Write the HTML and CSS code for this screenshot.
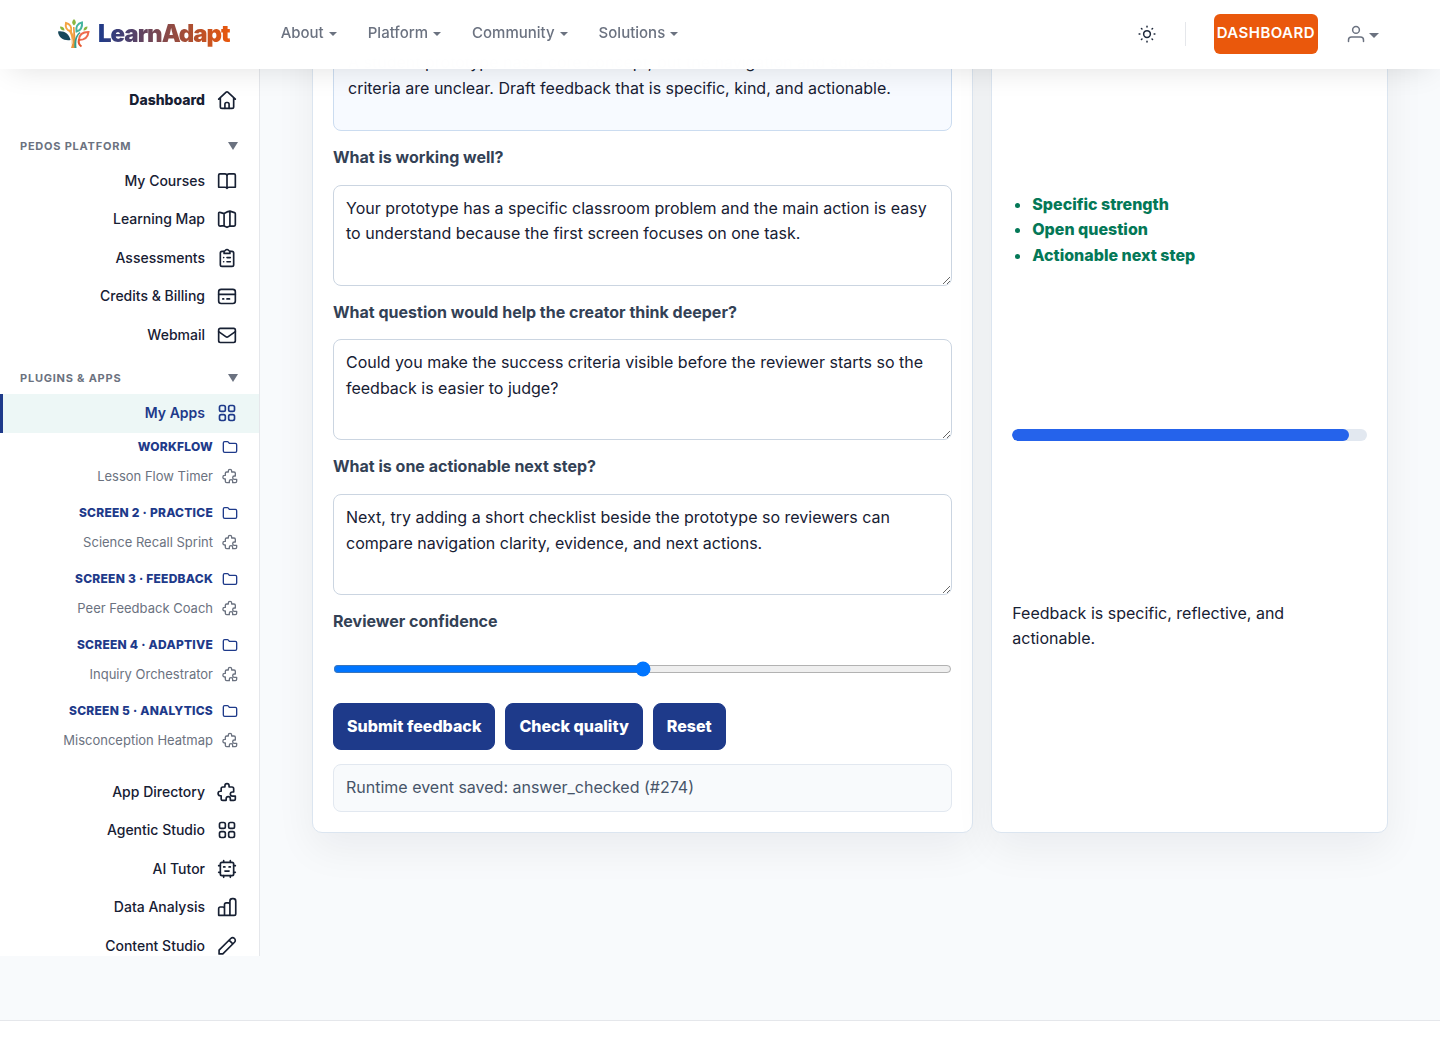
FILE: index.html
```html
<!DOCTYPE html>
<html lang="en">
<head>
    <meta charset="UTF-8">
    <meta name="viewport" content="width=device-width, initial-scale=1.0">
    <title>Peer Feedback Coach - LearnAdapt</title>
    <link rel="stylesheet" href="styles.css">
</head>
<body>
    <!-- Icon set -->
    <svg class="sprite" aria-hidden="true">
        <symbol id="i-home" viewBox="0 0 24 24"><path d="M2 11 11 2.600a1.500 1.500 0 0 1 2 0L22 11M4 9.500V20a2 2 0 0 0 2 2h12a2 2 0 0 0 2-2V9.500"/><path d="M9.500 22v-5a2 2 0 0 1 2-2h1a2 2 0 0 1 2 2v5"/></symbol>
        <symbol id="i-book" viewBox="0 0 24 24"><path d="M12 6v15V6a2.500 2.500 0 0 0-2.500-2.500H3.500A1.500 1.500 0 0 0 2 5v14.500h7.500A2.500 2.500 0 0 1 12 21a2.500 2.500 0 0 1 2.500-1.500H22V5a1.500 1.500 0 0 0-1.500-1.500h-6A2.500 2.500 0 0 0 12 6z"/></symbol>
        <symbol id="i-map" viewBox="0 0 24 24"><path d="M8.500 20 3.500 20.500A1.500 1.500 0 0 1 2 19V5a1.200 1.200 0 0 1 1.700-1L8.500 5.500v15L12 22l3.500-1.500v-18L12 3.500 8.500 5.500M15.500 2.500l5.500 1.800a1.500 1.500 0 0 1 1 1.400V19a1.500 1.500 0 0 1-1.500 1.500h-5"/></symbol>
        <symbol id="i-clipboard" viewBox="0 0 24 24"><path d="M8.500 4H6a2 2 0 0 0-2 2v14a2 2 0 0 0 2 2h12a2 2 0 0 0 2-2V6a2 2 0 0 0-2-2h-2.500"/><path d="M8.500 6.500V4c1.200 0 1.700-2.200 3.500-2.200S14.300 4 15.500 4v2.500zM8 11.500h.01M8 16.500h.01M12 11.500h4M12 16.500h4"/></symbol>
        <symbol id="i-card" viewBox="0 0 24 24"><rect x="2" y="4" width="20" height="17" rx="3"/><path d="M2 10h20M7 15.500h1M12 15.500h3"/></symbol>
        <symbol id="i-mail" viewBox="0 0 24 24"><rect x="2" y="4" width="20" height="17" rx="2"/><path d="m2 8 8.500 6a2.500 2.500 0 0 0 3 0L22 8"/></symbol>
        <symbol id="i-apps" viewBox="0 0 24 24"><rect x="3" y="3" width="7" height="7" rx="2"/><rect x="14" y="3" width="7" height="7" rx="2"/><rect x="3" y="14" width="7" height="7" rx="2"/><rect x="14" y="14" width="7" height="7" rx="2"/></symbol>
        <symbol id="i-folder" viewBox="0 0 24 24"><path d="M2 17V6a2 2 0 0 1 2-2h4a2 2 0 0 1 1.600.8L11 6.500h9a2 2 0 0 1 2 2v9.500a2 2 0 0 1-2 2H4a2 2 0 0 1-2-2z"/></symbol>
        <symbol id="i-puzzle" viewBox="0 0 24 24"><path d="M5 8a2 2 0 0 1 2-2h2.500V4.500a2.500 2.500 0 0 1 5 0V6H18a2 2 0 0 1 2 2v4h-1.500a2.500 2.500 0 0 0 0 5H22v3a2 2 0 0 1-2 2h-4v-2a2.500 2.500 0 0 0-5 0v2H7a2 2 0 0 1-2-2v-3.500H4a2.700 2.700 0 0 1 0-5.400h1z"/></symbol>
        <symbol id="i-bot" viewBox="0 0 24 24"><rect x="4" y="4" width="16" height="16" rx="2"/><path d="M8 2v2M16 2v2M8 20v2M16 20v2M2 8h2M2 16h2M20 8h2M20 16h2M8 9.500h1.500M14.500 9.500H16M9.500 14.500h5"/></symbol>
        <symbol id="i-bars" viewBox="0 0 24 24"><path d="M2 22V14a2 2 0 0 1 2-2h3a2 2 0 0 1 2 2v8zM9 22V9a2 2 0 0 1 2-2h2.500a2 2 0 0 1 2 2v13zM15.500 22V5a3 3 0 0 1 3-3h1a3 3 0 0 1 3 3v15a2 2 0 0 1-2 2z"/></symbol>
        <symbol id="i-pencil" viewBox="0 0 24 24"><path d="M2.500 21.500v-4.500L16.500 3a3 3 0 0 1 4.500 4.500L7 21.500zM14.500 5l4.500 4.500"/></symbol>
        <symbol id="i-sun" viewBox="0 0 24 24"><circle cx="12" cy="12" r="4.500"/><path d="M12 1.500v1M12 21.500v1M1.500 12h1M21.500 12h1M4.600 4.600l.7.7M18.700 18.700l.7.7M4.600 19.400l.7-.7M18.700 5.300l.7-.7"/></symbol>
        <symbol id="i-user" viewBox="0 0 24 24"><circle cx="12" cy="6.500" r="4.500"/><path d="M2 22v-2a4 4 0 0 1 4-4h12a4 4 0 0 1 4 4v2"/></symbol>
    </svg>

    <header class="navbar">
        <a class="brand" href="#">
            <svg class="brand-logo" viewBox="0 0 34 30" aria-hidden="true">
                <path fill="#f4a340" d="M14 29c1.500-6 1-13-3-18l2-.5c2 2 3 4 3.500 6.500z"/>
                <path fill="#e9963a" d="M14 29h5c-1-3-1-6-.5-9l-1-12h-1.500c.5 8 .5 15-2 21z"/>
                <path fill="#2f9e8f" d="M17.500 29c-.5-7 .5-12 5-16l1 1c-4 3.500-4.500 8-4 15z"/>
                <path fill="#17475a" d="M1 12.500c6-1 11 2 12.500 8.500C7 22 1.500 19 1 12.500z"/>
                <path fill="none" stroke="#f4a340" stroke-width="2" d="M14 12.500C9.500 11.500 8 8 9 4c4 1 6 4.500 5 8.500z"/>
                <path fill="none" stroke="#45b5a0" stroke-width="2" d="M19.500 12.500c-1-4.500 1-8 5.500-9 .5 4.500-1.500 8-5.500 9z"/>
                <path fill="none" stroke="#ef6a4c" stroke-width="2" d="M22 21c0-5 3.500-8 9.500-8-.5 5-4 8-9.500 8z"/>
                <path fill="none" stroke="#e4572e" stroke-width="2" d="M22 20c-1 4 0 6 2.500 7.500"/>
                <path fill="#8bb63f" d="M17 0c2.500 2.500 2.500 4.500 0 6.500-2.500-2-2.500-4 0-6.500zM3 7.500c3 0 4.500 1.500 4.500 4C4.500 11.500 3 10 3 7.500zM30.500 7.500c0 2.500-1.500 4-4 4 0-2.500 1.500-4 4-4z"/>
            </svg>
            <span class="brand-name">LearnAdapt</span>
        </a>
        <nav class="main-nav">
            <a href="#">About <span class="caret"></span></a>
            <a href="#">Platform <span class="caret"></span></a>
            <a href="#">Community <span class="caret"></span></a>
            <a href="#">Solutions <span class="caret"></span></a>
        </nav>
        <div class="nav-tools">
            <button class="icon-btn" type="button" aria-label="Toggle theme"><svg class="icon icon-sm"><use href="#i-sun"/></svg></button>
            <span class="divider"></span>
            <a class="dashboard-btn" href="#">DASHBOARD</a>
            <button class="icon-btn user-btn" type="button" aria-label="Account"><svg class="icon icon-sm"><use href="#i-user"/></svg><span class="caret caret-lg"></span></button>
        </div>
    </header>

    <div class="layout">
        <!-- Sidebar -->
        <aside class="sidebar">
            <a class="side-link strong" href="#">Dashboard <svg class="icon"><use href="#i-home"/></svg></a>

            <button class="side-heading" type="button">Pedos Platform <span class="toggle"></span></button>
            <a class="side-link" href="#">My Courses <svg class="icon"><use href="#i-book"/></svg></a>
            <a class="side-link" href="#">Learning Map <svg class="icon"><use href="#i-map"/></svg></a>
            <a class="side-link" href="#">Assessments <svg class="icon"><use href="#i-clipboard"/></svg></a>
            <a class="side-link" href="#">Credits &amp; Billing <svg class="icon"><use href="#i-card"/></svg></a>
            <a class="side-link" href="#">Webmail <svg class="icon"><use href="#i-mail"/></svg></a>

            <button class="side-heading" type="button">Plugins &amp; Apps <span class="toggle"></span></button>
            <a class="side-link active" href="#">My Apps <svg class="icon"><use href="#i-apps"/></svg></a>
            <div class="app-groups">
                <div class="app-group">
                    <a class="group-link" href="#">Workflow <svg class="icon icon-xs"><use href="#i-folder"/></svg></a>
                    <a class="app-link" href="#">Lesson Flow Timer <svg class="icon icon-xs"><use href="#i-puzzle"/></svg></a>
                </div>
                <div class="app-group">
                    <a class="group-link" href="#">Screen 2 · Practice <svg class="icon icon-xs"><use href="#i-folder"/></svg></a>
                    <a class="app-link" href="#">Science Recall Sprint <svg class="icon icon-xs"><use href="#i-puzzle"/></svg></a>
                </div>
                <div class="app-group">
                    <a class="group-link" href="#">Screen 3 · Feedback <svg class="icon icon-xs"><use href="#i-folder"/></svg></a>
                    <a class="app-link" href="#">Peer Feedback Coach <svg class="icon icon-xs"><use href="#i-puzzle"/></svg></a>
                </div>
                <div class="app-group">
                    <a class="group-link" href="#">Screen 4 · Adaptive <svg class="icon icon-xs"><use href="#i-folder"/></svg></a>
                    <a class="app-link" href="#">Inquiry Orchestrator <svg class="icon icon-xs"><use href="#i-puzzle"/></svg></a>
                </div>
                <div class="app-group">
                    <a class="group-link" href="#">Screen 5 · Analytics <svg class="icon icon-xs"><use href="#i-folder"/></svg></a>
                    <a class="app-link" href="#">Misconception Heatmap <svg class="icon icon-xs"><use href="#i-puzzle"/></svg></a>
                </div>
            </div>
            <a class="side-link" href="#">App Directory <svg class="icon"><use href="#i-puzzle"/></svg></a>
            <a class="side-link" href="#">Agentic Studio <svg class="icon"><use href="#i-apps"/></svg></a>
            <a class="side-link" href="#">AI Tutor <svg class="icon"><use href="#i-bot"/></svg></a>
            <a class="side-link" href="#">Data Analysis <svg class="icon"><use href="#i-bars"/></svg></a>
            <a class="side-link" href="#">Content Studio <svg class="icon"><use href="#i-pencil"/></svg></a>
        </aside>

        <main class="content">
            <form class="card feedback-form">
                <div class="scenario">
                    <p>A student prototype has a core concept, but the navigation and success criteria are unclear. Draft feedback that is specific, kind, and actionable.</p>
                </div>
                <label for="strength">What is working well?</label>
                <textarea id="strength">Your prototype has a specific classroom problem and the main action is easy to understand because the first screen focuses on one task.</textarea>
                <label for="question">What question would help the creator think deeper?</label>
                <textarea id="question">Could you make the success criteria visible before the reviewer starts so the feedback is easier to judge?</textarea>
                <label for="next-step">What is one actionable next step?</label>
                <textarea id="next-step">Next, try adding a short checklist beside the prototype so reviewers can compare navigation clarity, evidence, and next actions.</textarea>
                <label for="confidence">Reviewer confidence</label>
                <input type="range" id="confidence" min="1" max="5" value="3">
                <div class="actions">
                    <button type="button">Submit feedback</button>
                    <button type="button">Check quality</button>
                    <button type="reset">Reset</button>
                </div>
                <div class="status" role="status">Runtime event saved: answer_checked (#274)</div>
            </form>

            <section class="card quality">
                <ul class="checks">
                    <li>Specific strength</li>
                    <li>Open question</li>
                    <li>Actionable next step</li>
                </ul>
                <div class="meter"><div class="meter-fill" style="width: 95%"></div></div>
                <p>Feedback is specific, reflective, and actionable.</p>
            </section>
        </main>
    </div>

    <footer class="footer"></footer>
</body>
</html>
```
FILE: styles.css
```css
* { box-sizing: border-box; }
body { margin: 0; min-height: 100vh; display: flex; flex-direction: column; background: #f8fafc; color: #172033; font-family: Inter, "Liberation Sans", sans-serif; font-size: 16px; line-height: 1.6; }
a { color: inherit; text-decoration: none; }
button, textarea { font: inherit; }
p { margin: 0; }

.sprite { display: none; }
.icon { width: 20px; height: 20px; flex: none; fill: none; stroke: currentColor; stroke-width: 2; stroke-linecap: round; stroke-linejoin: round; }
.icon-sm { width: 18px; height: 18px; }
.icon-xs { width: 16px; height: 16px; }

/* Navbar */
.navbar { position: fixed; top: 0; left: 0; right: 0; z-index: 10; height: 69px; padding: 0 61px 1px 57px; display: flex; align-items: center; background: rgba(255, 255, 255, 0.99); backdrop-filter: blur(12px); box-shadow: 0 10px 30px -10px rgba(0, 0, 0, 0.12); }
.brand { display: flex; align-items: center; gap: 7px; }
.brand-logo { width: 34px; height: 30px; }
.brand-name { font-size: 24px; font-weight: 900; letter-spacing: -1px; line-height: 32px; background: linear-gradient(90deg, #1e3a8a, #ea580c); background-clip: text; -webkit-background-clip: text; color: transparent; }
.main-nav { display: flex; gap: 31px; margin-left: 51px; padding-bottom: 2px; color: #6b7280; font-size: 15px; font-weight: 500; }
.main-nav a { display: flex; align-items: center; gap: 5px; }
.caret { border: 4px solid transparent; border-top-color: currentColor; border-bottom: 0; margin-top: 2px; }
.caret-lg { border-width: 5px; border-bottom: 0; }
.nav-tools { display: flex; align-items: center; margin-left: auto; }
.icon-btn { display: flex; align-items: center; gap: 4px; padding: 0; border: 0; background: none; color: #1e293b; cursor: pointer; }
.user-btn { margin-left: 29px; color: #6b7280; }
.divider { width: 1px; height: 24px; margin: 0 28px 0 29px; background: #e5e7eb; }
.dashboard-btn { height: 40px; padding: 0 3px; border-radius: 6px; background: #ea580c; color: #fff; font-size: 15px; font-weight: 600; letter-spacing: 0.03em; line-height: 38px; }

.layout { display: flex; align-items: flex-start; padding-bottom: 64px; }

/* Sidebar */
.sidebar { position: sticky; top: 69px; width: 260px; flex: none; height: calc(100vh - 153px); margin-top: 69px; padding-top: 12px; overflow: hidden; background: #fff; border-right: 1px solid #e5e7eb; }
.side-link { display: flex; align-items: center; justify-content: flex-end; gap: 12px; padding: 7px 22px 7px 20px; border-left: 3px solid transparent; font-size: 14px; font-weight: 500; line-height: 1.75; }
.side-link.strong { font-weight: 800; margin-bottom: 2px; }
.side-link.active { color: #1e3a8a; background: #edf7f6; border-left-color: #1e3a8a; font-weight: 600; }
.side-heading { display: flex; align-items: center; justify-content: space-between; width: 100%; padding: 16px 21px 8px 20px; border: 0; background: none; color: #6b7280; font-size: 11px; font-weight: 700; line-height: 16px; letter-spacing: 0.07em; text-transform: uppercase; cursor: pointer; }
.toggle { border: 5px solid transparent; border-top: 8px solid currentColor; border-bottom: 0; }
.app-groups { padding-bottom: 10px; }
.app-group { padding-bottom: 8px; }
.group-link, .app-link { display: flex; align-items: center; justify-content: flex-end; gap: 9px; padding: 0 21px; }
.group-link { color: #1e3a8a; font-size: 12px; font-weight: 800; line-height: 28px; letter-spacing: 0.02em; text-transform: uppercase; }
.app-link { color: #6b7280; font-size: 13px; line-height: 30px; }

/* Content */
.content { flex: 1; display: grid; grid-template-columns: 5fr 3fr; gap: 18px; padding: 0 52px; }
.card { display: grid; gap: 14px; padding: 20px; background: #fff; border: 1px solid #dbe5f0; border-radius: 10px; box-shadow: 0 16px 40px rgba(15, 23, 42, 0.06); }
.scenario { padding: 28px 14px 29px; background: #f7faff; border: 1px solid #cbdcf0; border-radius: 8px; }
.feedback-form label { color: #334155; font-weight: 700; }
textarea { display: block; width: 100%; height: 101px; padding: 10px 12px; border: 1px solid #cbd5e1; border-radius: 8px; background: #fff; color: #172033; resize: vertical; }
input[type="range"] { width: 100%; height: 40px; margin: 0; }
.actions { display: flex; gap: 10px; }
.actions button { padding: 10px 13px; border: 1px solid #1e3a8a; border-radius: 8px; background: #1e3a8a; color: #fff; font-weight: 800; cursor: pointer; }
.status { padding: 10px 12px; border: 1px solid #e2e8f0; border-radius: 8px; background: #f8fafc; color: #475569; }
.quality { gap: 160px; align-content: end; padding-bottom: 180px; }
.checks { margin: 0; padding-left: 20px; color: #047857; font-weight: 800; }
.meter { height: 12px; border-radius: 6px; background: #e2e8f0; overflow: hidden; }
.meter-fill { height: 100%; border-radius: 6px; background: #2563eb; }

.footer { flex: 1; background: #fff; border-top: 1px solid #e5e7eb; }
```
